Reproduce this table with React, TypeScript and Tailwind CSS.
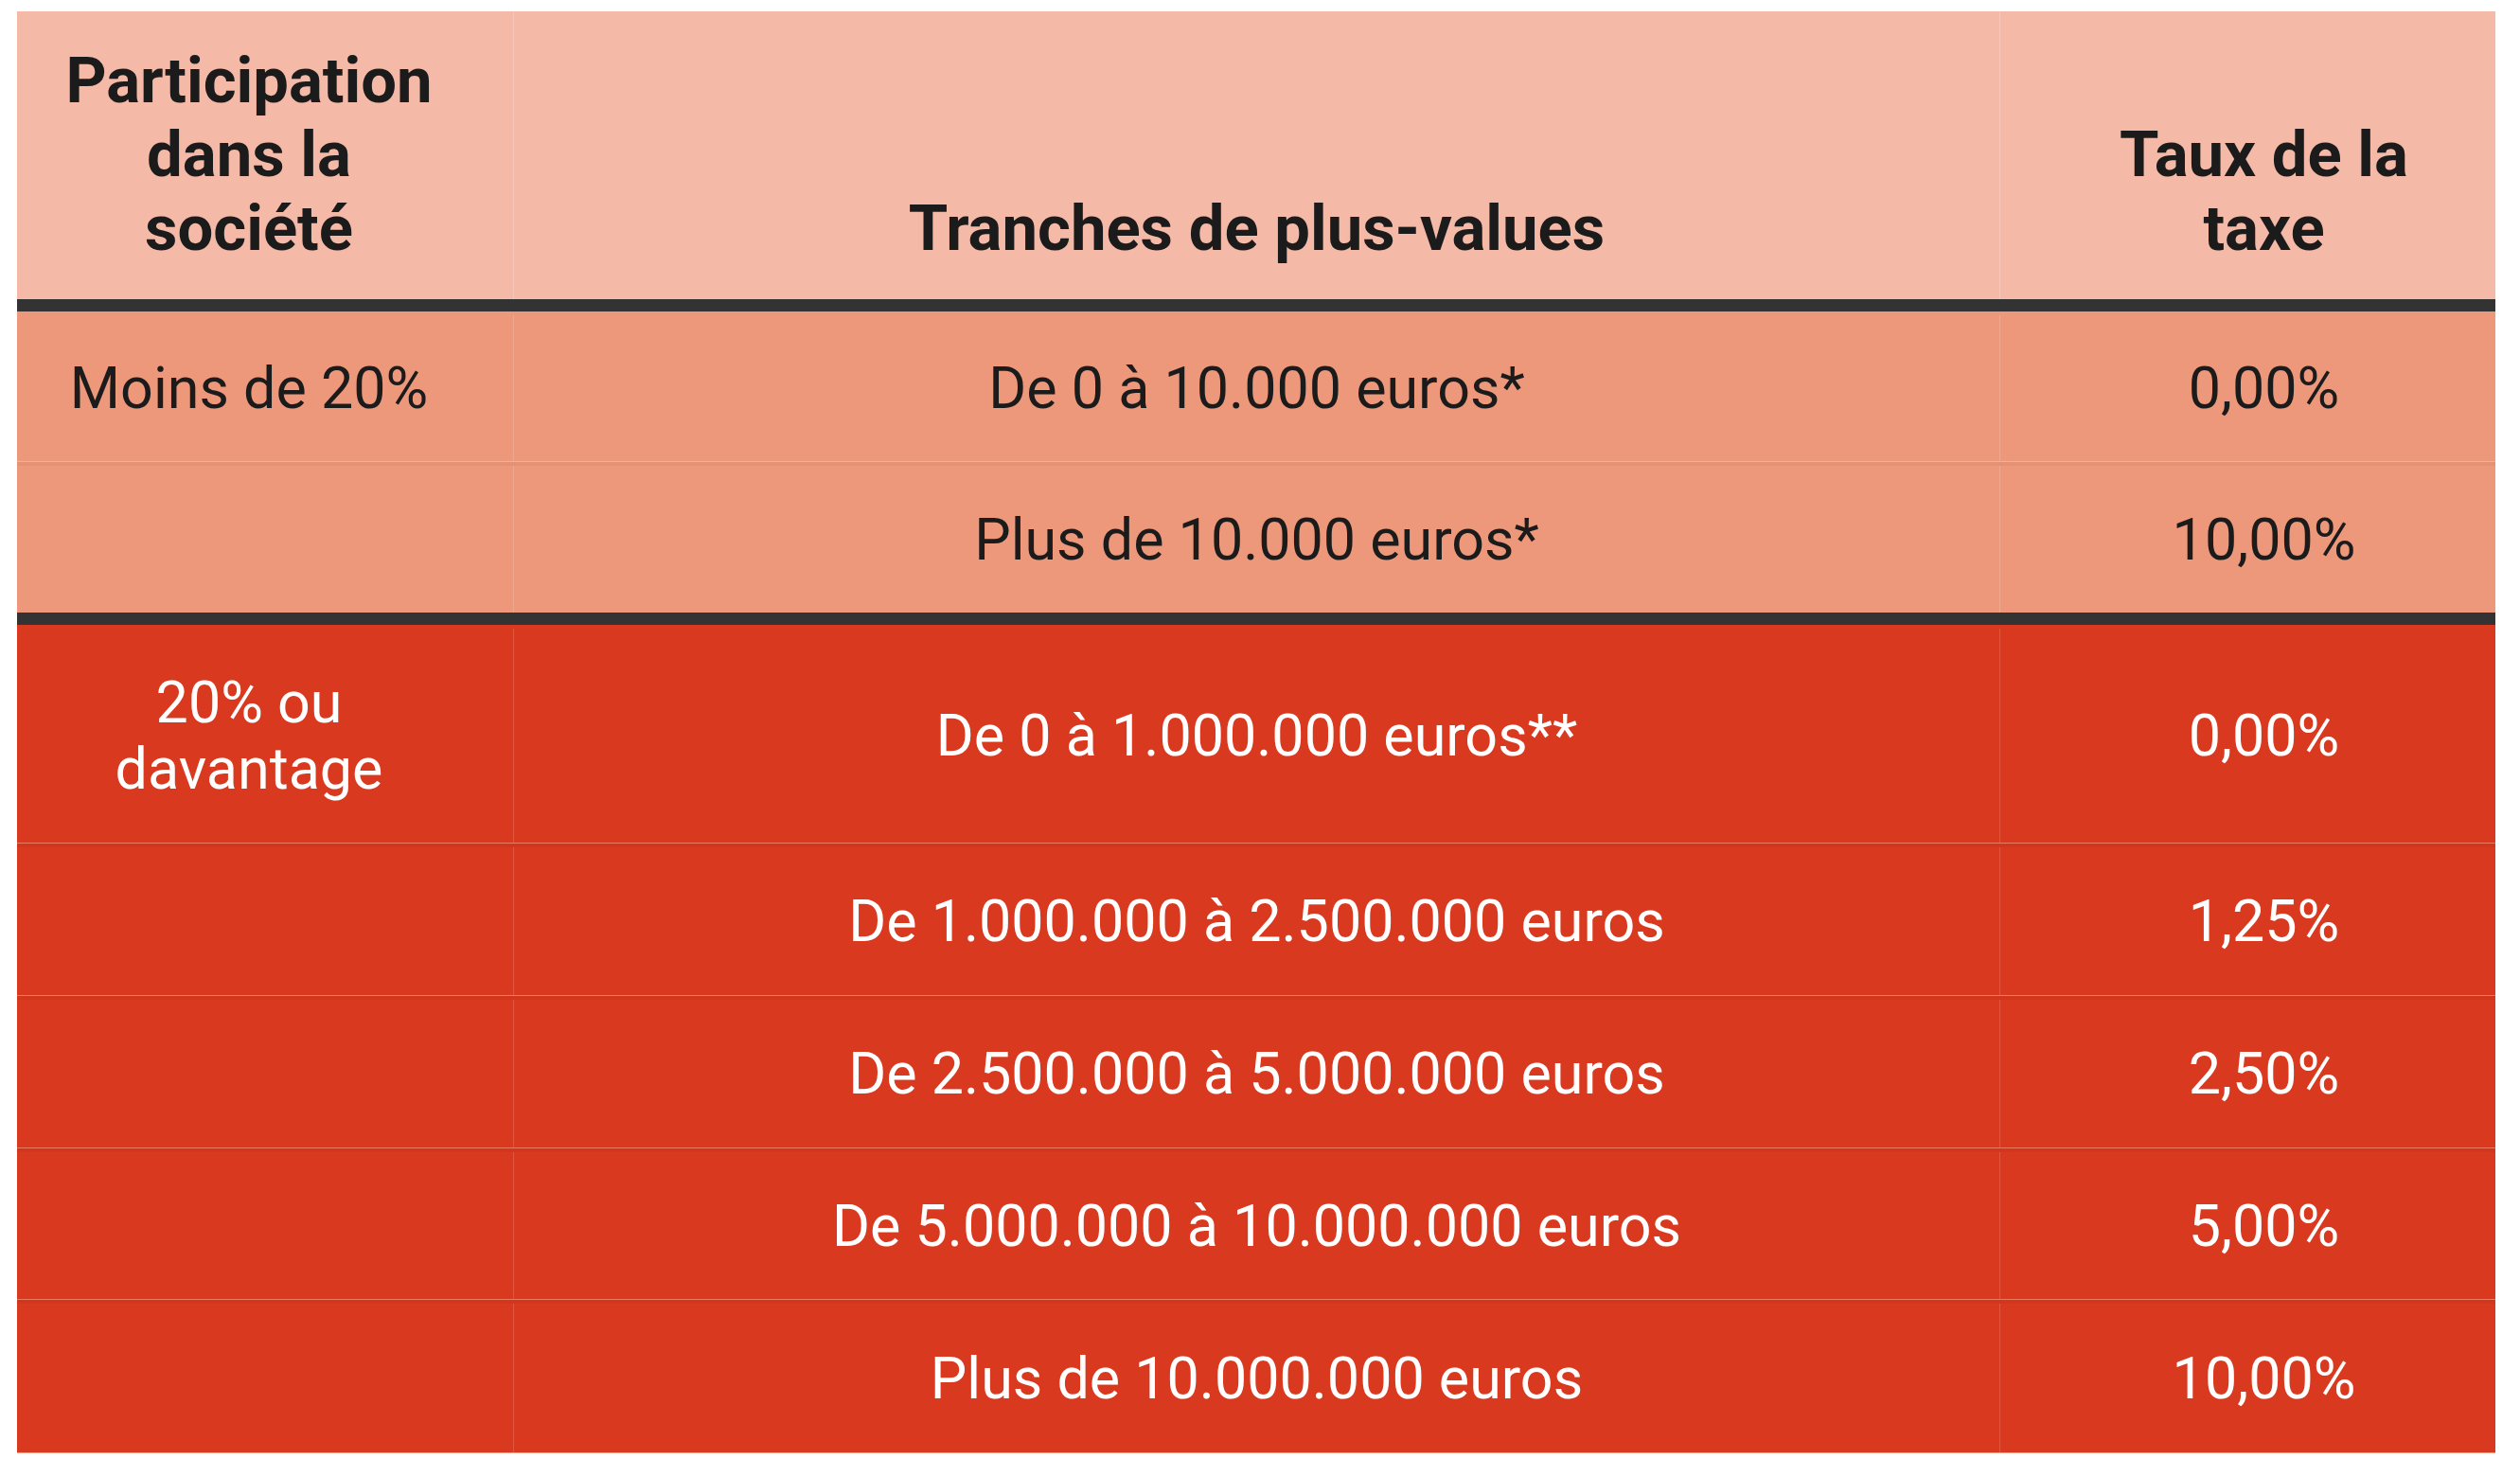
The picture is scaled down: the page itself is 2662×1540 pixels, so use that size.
import React from "react";

type Row = {
  part?: React.ReactNode;
  range: string;
  rate: string;
  h: string;
};

const lowRows: Row[] = [
  { part: "Moins de 20%", range: "De 0 à 10.000 euros*", rate: "0,00%", h: "h-[158px]" },
  { range: "Plus de 10.000 euros*", rate: "10,00%", h: "h-[160px]" },
];

const highRows: Row[] = [
  {
    part: (
      <>
        20% ou
        <br />
        davantage
      </>
    ),
    range: "De 0 à 1.000.000 euros**",
    rate: "0,00%",
    h: "h-[230px]",
  },
  { range: "De 1.000.000 à 2.500.000 euros", rate: "1,25%", h: "h-[161px]" },
  { range: "De 2.500.000 à 5.000.000 euros", rate: "2,50%", h: "h-[161px]" },
  { range: "De 5.000.000 à 10.000.000 euros", rate: "5,00%", h: "h-[160px]" },
  { range: "Plus de 10.000.000 euros", rate: "10,00%", h: "h-[162px]" },
];

const cols = "grid grid-cols-[524px_1570px_524px]";

const Group = ({ rows, light }: { rows: Row[]; light: boolean }) => {
  const bg = light ? "bg-[#ed987b] text-[#1b1b1b]" : "bg-[#d93a1f] text-white";
  const line = light ? "border-[#f3b096]" : "border-[#ec7a62]";
  const divider = light ? "border-[#f0a88e]" : "border-[#e4553c]";
  return (
    <div className={bg}>
      {rows.map((r, i) => (
        <div
          key={i}
          className={`${cols} ${r.h} pt-[4px] ${
            i > 0 ? `border-t ${line} shadow-[inset_0_4px_0_rgba(0,0,0,0.04)]` : ""
          }`}
        >
          <div className="flex items-center justify-center pr-[34px] text-center">{r.part}</div>
          <div className={`flex items-center justify-center border-l ${divider}`}>{r.range}</div>
          <div className={`flex items-center justify-center border-l ${divider} pl-[34px]`}>
            {r.rate}
          </div>
        </div>
      ))}
    </div>
  );
};

export default function App() {
  return (
    <div
      className="min-h-screen bg-white pl-[18px] pt-[12px]"
      style={{ fontFamily: "Roboto, 'Liberation Sans', sans-serif" }}
    >
      <div className="w-[2618px] text-[61px] leading-[70px]">
        <div
          className={`${cols} h-[304px] bg-[#f5b9a7] text-[67px] font-bold leading-[78px] text-[#1b1b1b]`}
        >
          <div className="flex items-end justify-center pb-[36px] pr-[34px] text-center">
            <span>
              Participation
              <br />
              dans la
              <br />
              société
            </span>
          </div>
          <div className="flex items-end justify-center border-l border-[#f8c7b7] pb-[36px] text-center">
            Tranches de plus-values
          </div>
          <div className="flex items-end justify-center border-l border-[#f8c7b7] pb-[36px] pl-[34px] text-center">
            <span>
              Taux de la
              <br />
              taxe
            </span>
          </div>
        </div>
        <div className="h-[13px] bg-[#333333]" />
        <Group rows={lowRows} light />
        <div className="h-[13px] bg-[#333333]" />
        <Group rows={highRows} light={false} />
        <div className="h-px bg-[#f2957c]" />
      </div>
    </div>
  );
}
